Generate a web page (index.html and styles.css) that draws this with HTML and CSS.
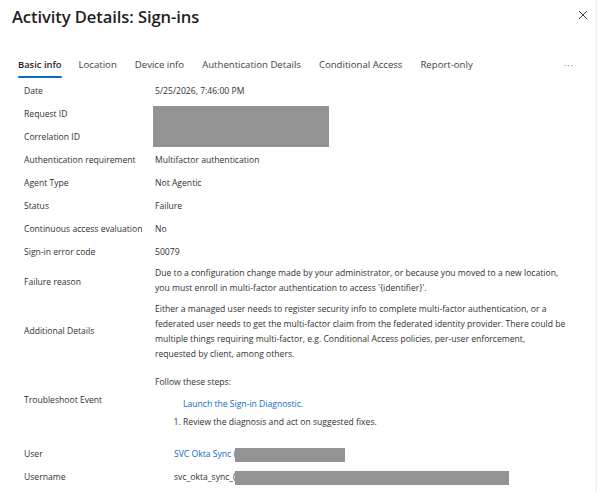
FILE: index.html
```html
<!DOCTYPE html>
<html lang="en">
<head>
  <meta charset="UTF-8" />
  <meta name="viewport" content="width=device-width, initial-scale=1.0" />
  <title>Activity Details: Sign-ins</title>
  <link rel="stylesheet" href="styles.css">
</head>
<body>
  <div class="panel">
    <header class="panel-head">
      <h1>Activity Details: Sign-ins</h1>
      <button class="close-btn" aria-label="Close">
        <svg width="10" height="10" viewBox="0 0 10 10">
          <path d="M1 1 L9 9 M9 1 L1 9" stroke="#424242" stroke-width="1" fill="none" />
        </svg>
      </button>
    </header>

    <nav class="tabs">
      <span class="tab active">Basic info</span>
      <span class="tab">Location</span>
      <span class="tab">Device info</span>
      <span class="tab">Authentication Details</span>
      <span class="tab">Conditional Access</span>
      <span class="tab">Report-only</span>
      <span class="tab-more">&middot;&middot;&middot;</span>
    </nav>

    <div class="details">
      <div class="label">Date</div>
      <div class="value">5/25/2026, 7:46:00 PM</div>

      <div class="label">Request ID</div>
      <div class="value redacted-cell"><span class="redact redact-ids"></span></div>

      <div class="label">Correlation ID</div>
      <div class="value"></div>

      <div class="label">Authentication requirement</div>
      <div class="value">Multifactor authentication</div>

      <div class="label">Agent Type</div>
      <div class="value">Not Agentic</div>

      <div class="label">Status</div>
      <div class="value">Failure</div>

      <div class="label">Continuous access evaluation</div>
      <div class="value">No</div>

      <div class="label">Sign-in error code</div>
      <div class="value">50079</div>

      <div class="label">Failure reason</div>
      <div class="value multi">Due to a configuration change made by your administrator, or because you moved to a new location, you must enroll in multi-factor authentication to access '{identifier}'.</div>

      <div class="label raised">Additional Details</div>
      <div class="value multi">Either a managed user needs to register security info to complete multi-factor authentication, or a federated user needs to get the multi-factor claim from the federated identity provider. There could be multiple things requiring multi-factor, e.g. Conditional Access policies, per-user enforcement,<br>requested by client, among others.</div>

      <div class="label lifted">Troubleshoot Event</div>
      <div class="value steps">
        <p>Follow these steps:</p>
        <a class="link step-link" href="#">Launch the Sign-in Diagnostic.</a>
        <ol>
          <li>Review the diagnosis and act on suggested fixes.</li>
        </ol>
      </div>

      <div class="label">User</div>
      <div class="value indented"><a class="link" href="#">SVC Okta Sync (</a><span class="redact redact-user"></span></div>

      <div class="label">Username</div>
      <div class="value indented">svc_okta_sync_(<span class="redact redact-name"></span></div>
    </div>
  </div>
</body>
</html>
```

FILE: styles.css
```css
body {
  margin: 0;
  padding: 0;
  background: #fff;
  color: #323130;
  font-family: "Open Sans", "Noto Sans", sans-serif;
  font-size: 8.6px;
  overflow: hidden;
}

.panel {
  height: 492px;
  border-right: 1px solid #ececec;
  box-sizing: border-box;
}

.panel-head {
  display: flex;
  align-items: center;
  justify-content: space-between;
  padding: 2px 12px 0 12px;
  height: 28px;
}

.panel-head h1 {
  margin: 0;
  font-size: 16.6px;
  font-weight: 600;
  color: #1f1f1f;
  letter-spacing: -0.1px;
}

.close-btn {
  background: none;
  border: none;
  padding: 0;
  margin: 0 -4px 3px 0;
  display: flex;
}

.tabs {
  display: flex;
  align-items: center;
  margin-top: 25px;
  padding-left: 18px;
  height: 20px;
}

.tab {
  position: relative;
  margin-right: 18px;
  font-size: 9.6px;
  color: #424242;
  line-height: 20px;
}

.tab.active {
  margin-right: 17px;
  font-size: 9.4px;
  color: #242424;
  font-weight: 600;
}

.tab.active::after {
  content: "";
  position: absolute;
  left: 0;
  right: 0;
  bottom: -3px;
  height: 2px;
  border-radius: 1px;
  background: #0f6cbd;
}

.tab-more {
  margin-left: auto;
  margin-right: 22px;
  color: #616161;
  font-size: 9px;
  letter-spacing: 1px;
}

.details {
  display: grid;
  grid-template-columns: 131px 1fr;
  padding: 0 26px 0 24px;
  margin-top: 5px;
  line-height: 15px;
}

.label,
.value {
  padding: 4px 0;
  min-height: 15px;
}

.label {
  align-self: center;
}

.label.raised {
  padding-bottom: 8px;
}

.label.lifted {
  padding-bottom: 12px;
}

.value {
  position: relative;
}

.value.multi {
  padding: 2px 0 4px;
}

.value.indented {
  padding-left: 19px;
}

.link {
  color: #0f6cbd;
  text-decoration: none;
}

.redact {
  display: inline-block;
  background: #939393;
  vertical-align: middle;
}

.redacted-cell .redact-ids {
  position: absolute;
  left: -2px;
  top: 3px;
  width: 176px;
  height: 41px;
}

.redact-user {
  width: 110px;
  height: 14px;
  margin-left: -1px;
}

.redact-name {
  width: 274px;
  height: 14px;
  margin-left: -1px;
}

.steps {
  padding: 9px 0 13px;
}

.steps p {
  margin: 0 0 7px;
}

.step-link {
  display: block;
  margin-left: 28px;
}

.steps ol {
  margin: 3px 0 0;
  padding-left: 28px;
}
```
